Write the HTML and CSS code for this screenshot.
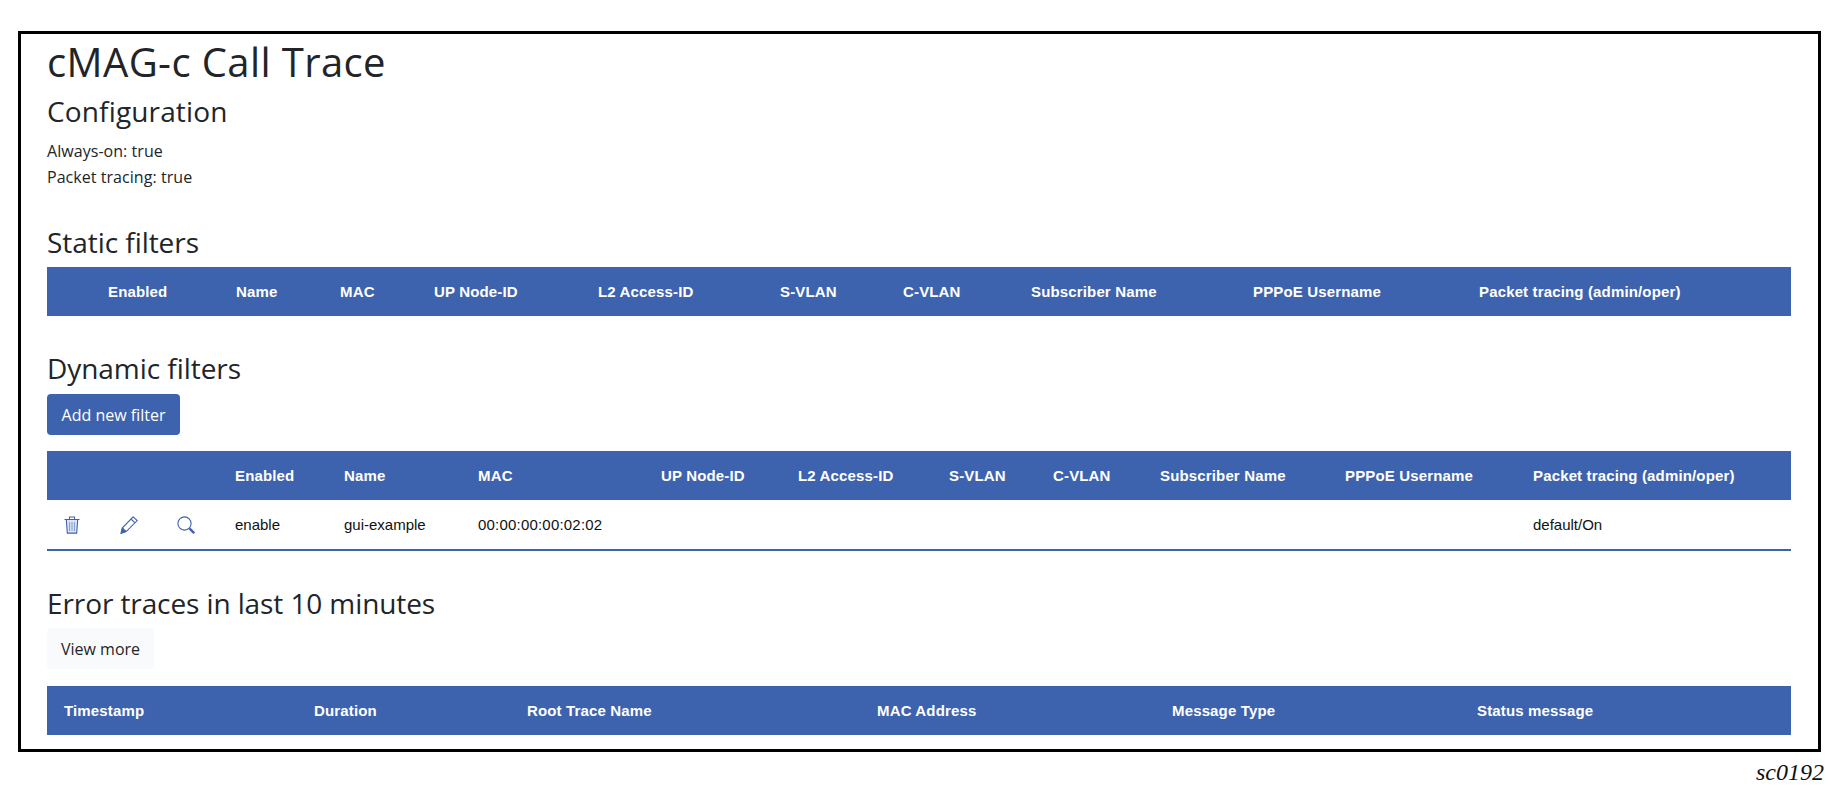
FILE: index.html
```html
<!DOCTYPE html>
<html lang="en">
<head>
<meta charset="utf-8">
<title>cMAG-c Call Trace</title>
<link rel="stylesheet" href="styles.css">
</head>
<body>
<main class="frame">
  <h1 class="title">cMAG-c Call Trace</h1>
  <h2 class="heading heading-config">Configuration</h2>
  <p class="line">Always-on: true</p>
  <p class="line">Packet tracing: true</p>

  <h2 class="heading heading-static">Static filters</h2>
  <table class="grid">
    <colgroup>
      <col class="s0"><col class="s1"><col class="s2"><col class="s3"><col class="s4"><col class="s5"><col class="s6"><col class="s7"><col class="s8"><col class="s9"><col>
    </colgroup>
    <thead>
      <tr><th></th><th>Enabled</th><th>Name</th><th>MAC</th><th>UP Node-ID</th><th>L2 Access-ID</th><th>S-VLAN</th><th>C-VLAN</th><th>Subscriber Name</th><th>PPPoE Username</th><th>Packet tracing (admin/oper)</th></tr>
    </thead>
  </table>

  <h2 class="heading heading-dynamic">Dynamic filters</h2>
  <button class="btn btn-primary">Add new filter</button>
  <table class="grid grid-dynamic">
    <colgroup>
      <col class="d0"><col class="d0"><col class="d1"><col class="d2"><col class="d3"><col class="d4"><col class="d5"><col class="d6"><col class="d7"><col class="d8"><col class="d9"><col class="d10"><col>
    </colgroup>
    <thead>
      <tr><th></th><th></th><th></th><th>Enabled</th><th>Name</th><th>MAC</th><th>UP Node-ID</th><th>L2 Access-ID</th><th>S-VLAN</th><th>C-VLAN</th><th>Subscriber Name</th><th>PPPoE Username</th><th>Packet tracing (admin/oper)</th></tr>
    </thead>
    <tbody>
      <tr>
        <td class="icon-cell">
          <svg class="icon" viewBox="0 0 18 18" aria-label="Delete"><path class="tint" d="M3.3 3.5l1 13.6h9.4l1-13.6z"/><path class="ln" d="M1.5 3.5h15M6.5 3.2V1h5v2.2M3.3 3.5l1 13.6h9.4l1-13.6"/><path class="ln thin" d="M6.6 6v9M9 6v9M11.4 6v9"/></svg>
        </td>
        <td class="icon-cell">
          <svg class="icon" viewBox="0 0 18 18" aria-label="Edit"><path class="ln" d="M13.2 .8l4 3.8L6.2 15.6l-5.2 1.8 1.2-5.4zM11 3l4 3.8M2.6 12.4l3.4 3"/><path class="fill" d="M.8 17.6l1.2-5.2 2 .2.2 1.6 1.8.4-.2 1.4z"/></svg>
        </td>
        <td class="icon-cell">
          <svg class="icon" viewBox="0 0 18 18" aria-label="Search"><circle class="ln" cx="7.5" cy="7.5" r="6.6"/><path class="ln heavy" d="M12.4 12.4l4.8 4.8"/></svg>
        </td>
        <td>enable</td><td>gui-example</td><td class="mac">00:00:00:00:02:02</td><td></td><td></td><td></td><td></td><td></td><td></td><td>default/On</td>
      </tr>
    </tbody>
  </table>

  <h2 class="heading heading-error">Error traces in last 10 minutes</h2>
  <button class="btn btn-light">View more</button>
  <table class="grid grid-error">
    <colgroup>
      <col class="e0"><col class="e1"><col class="e2"><col class="e3"><col class="e4"><col class="e5"><col>
    </colgroup>
    <thead>
      <tr><th></th><th>Timestamp</th><th>Duration</th><th>Root Trace Name</th><th>MAC Address</th><th>Message Type</th><th>Status message</th></tr>
    </thead>
  </table>
</main>
<p class="caption">sc0192</p>
</body>
</html>
```

FILE: styles.css
```css
html, body { margin: 0; padding: 0; background: #fff; }
body { width: 1839px; height: 793px; overflow: hidden; font-family: "Open Sans", "Noto Sans", sans-serif; color: #212529; }

.frame {
  box-sizing: border-box;
  width: 1803px;
  height: 721px;
  margin: 31px 0 0 18px;
  padding: 0 27px 0 26px;
  border: 3px solid #000;
}

.title { margin: 0; padding-top: 4px; font-size: 40px; line-height: 48px; font-weight: 400; letter-spacing: .4px; }
.heading { margin: 0; font-size: 28px; line-height: 34px; font-weight: 400; letter-spacing: -0.05px; }
.heading-config { margin-top: 8px; letter-spacing: .15px; }
.heading-static { margin-top: 35px; margin-bottom: 8px; }
.heading-dynamic { margin-top: 35px; margin-bottom: 9px; }
.heading-error { margin-top: 35px; margin-bottom: 8px; letter-spacing: -0.1px; }

.line { margin: 0; font-size: 16px; line-height: 26px; letter-spacing: .05px; }
.line:first-of-type { margin-top: 10px; }

.btn {
  display: block;
  height: 41px;
  padding: 1px 0 0;
  border: 0;
  border-radius: 4px;
  font-family: inherit;
  font-size: 16px;
  font-weight: 400;
}
.btn-primary { width: 133px; background: #3e63ae; color: #fff; margin-bottom: 16px; }
.btn-light { width: 107px; background: #f9fafc; color: #212529; margin-bottom: 17px; }

.grid { width: 1744px; table-layout: fixed; border-collapse: collapse; font-family: "Liberation Sans", Arial, sans-serif; font-size: 15px; color: #111; }
.grid th { height: 49px; padding: 0; background: #3e63ae; color: #fff; font-weight: 700; text-align: left; letter-spacing: .15px; }
.grid td { height: 49px; padding: 0; border-bottom: 2px solid #3e63ae; }
.grid .mac { letter-spacing: .2px; }
.grid .icon-cell { padding-left: 16px; line-height: 0; }

.icon { width: 18px; height: 18px; display: inline-block; }
.ln { fill: none; stroke: #3e63ae; stroke-width: 1.1; }
.thin { stroke-width: 1; stroke: #7d9bd0; }
.heavy { stroke-width: 2.4; }
.fill { fill: #3e63ae; }
.tint { fill: #dbe5f4; }

.s0 { width: 61px; } .s1 { width: 128px; } .s2 { width: 104px; } .s3 { width: 94px; } .s4 { width: 164px; }
.s5 { width: 182px; } .s6 { width: 123px; } .s7 { width: 128px; } .s8 { width: 222px; } .s9 { width: 226px; }

.d0 { width: 57px; } .d1 { width: 74px; } .d2 { width: 109px; } .d3 { width: 134px; } .d4 { width: 183px; }
.d5 { width: 137px; } .d6 { width: 151px; } .d7 { width: 104px; } .d8 { width: 107px; } .d9 { width: 185px; } .d10 { width: 188px; }

.e0 { width: 17px; } .e1 { width: 250px; } .e2 { width: 213px; } .e3 { width: 350px; } .e4 { width: 295px; } .e5 { width: 305px; }

.caption { margin: 6px 15px 0 0; text-align: right; font-family: "Liberation Serif", serif; font-style: italic; font-size: 24px; line-height: 28px; color: #111; }
```
